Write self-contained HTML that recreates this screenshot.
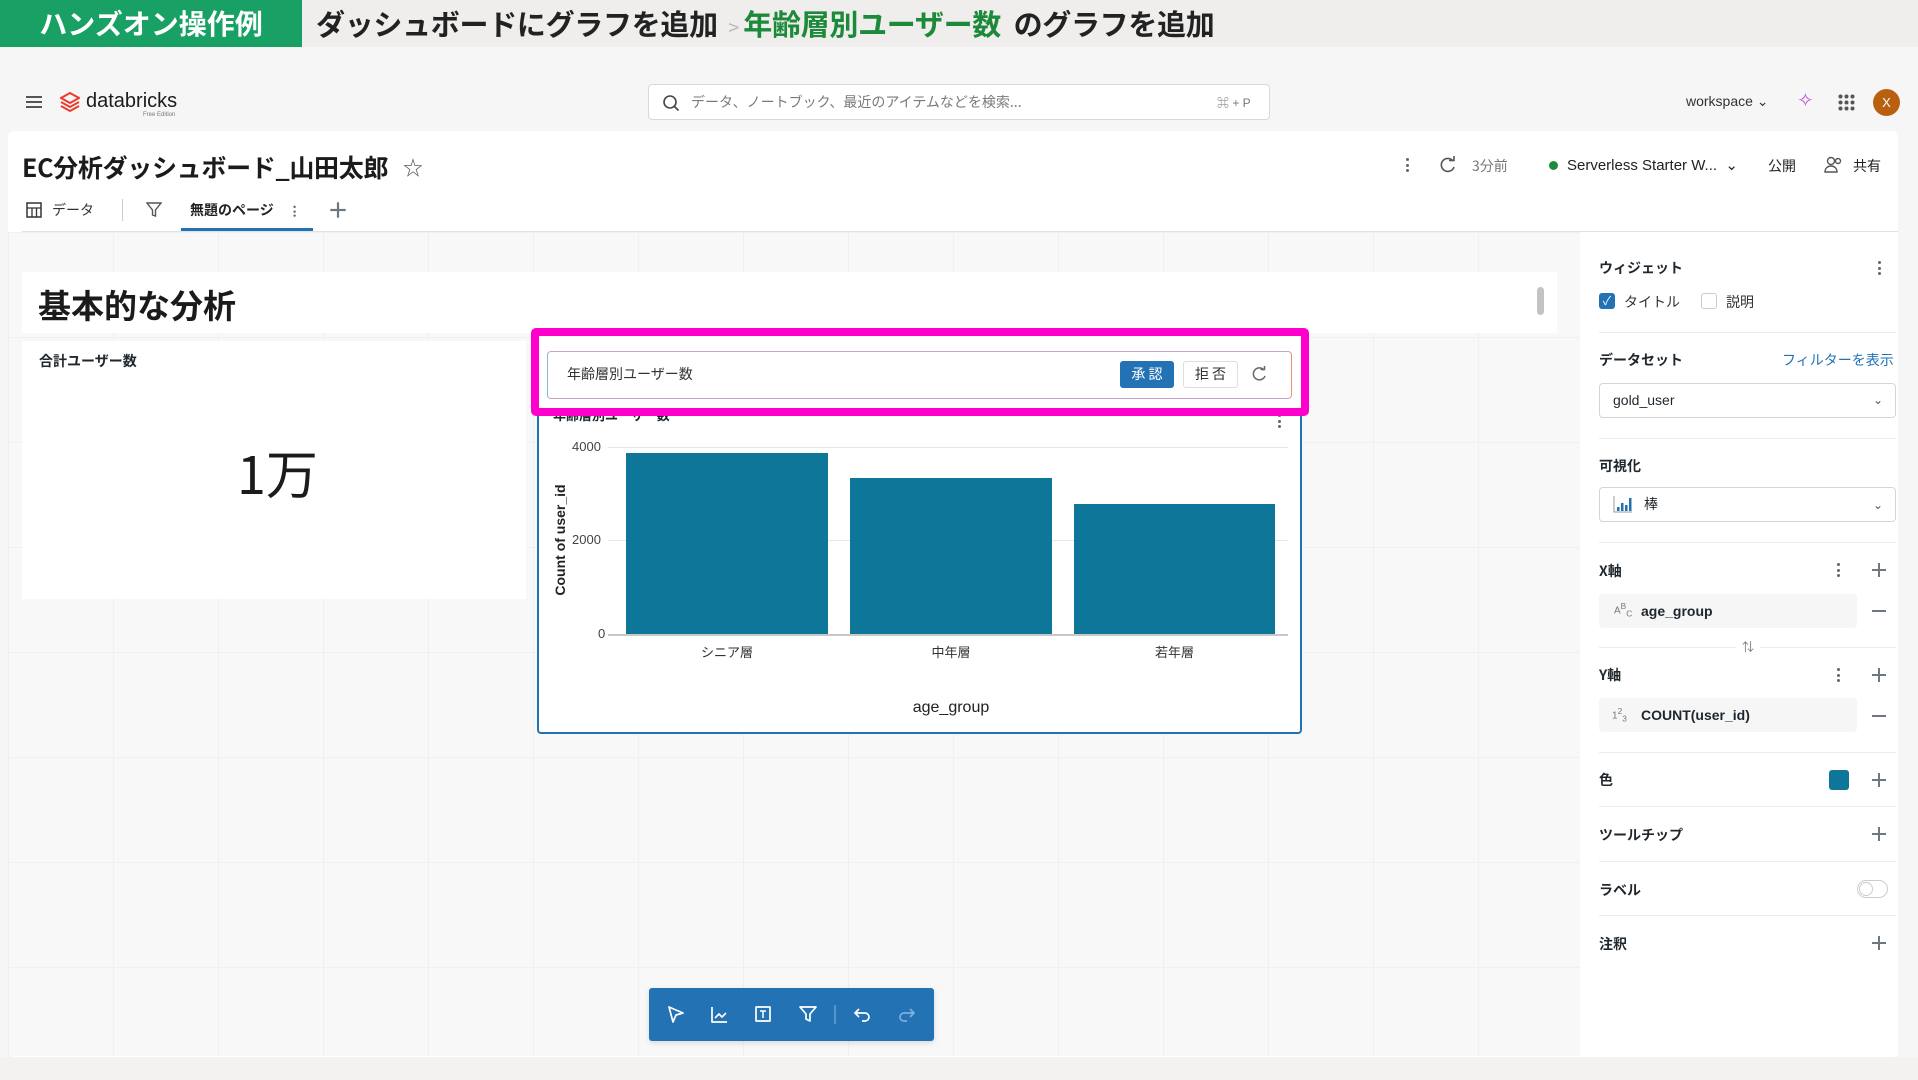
<!DOCTYPE html>
<html><head><meta charset="utf-8"><style>
*{box-sizing:border-box;margin:0;padding:0}
body{width:1918px;height:1080px;overflow:hidden;background:#f6f6f6;font-family:"Liberation Sans","Noto Sans CJK JP",sans-serif;color:#1f272d;position:relative}
.a{position:absolute}
.jp{font-family:"Noto Sans CJK JP","Liberation Sans",sans-serif}
.lbl{font-weight:bold;font-size:14px}
.sep{position:absolute;left:1599px;width:297px;height:1px;background:#ebebeb}
.plus{position:absolute;width:14px;height:14px}
.plus:before,.plus:after{content:"";position:absolute;background:#6f7780}
.plus:before{left:0;top:6px;width:14px;height:1.5px}
.plus:after{left:6px;top:0;width:1.5px;height:14px}
.kb{position:absolute;width:4px}
.kb i{display:block;width:3px;height:3px;border-radius:50%;background:#5f6770;margin-bottom:2.5px}
</style></head><body>
<!-- banner -->
<div class="a" style="left:0;top:0;width:1918px;height:47px;background:#efeeec"></div>
<div class="a jp" style="left:0;top:0;width:302px;height:47px;background:#18a065;color:#fff;font-size:28px;font-weight:bold;line-height:47px;text-align:center">ハンズオン操作例</div>
<div class="a jp" style="left:316px;top:0;height:47px;line-height:47px;font-size:29px;font-weight:bold;color:#222;white-space:nowrap;letter-spacing:-0.3px">ダッシュボードにグラフを追加 <span style="color:#bbb;font-weight:normal;font-size:20px">&nbsp;&gt;&nbsp;</span><span style="color:#1c8a3a">年齢層別ユーザー数</span>&nbsp; のグラフを追加</div>
<!-- nav -->
<div class="a" style="left:0;top:47px;width:1918px;height:84px;background:#f6f6f6"></div>
<div class="a" style="left:26px;top:96px;width:16px;height:2px;background:#555;box-shadow:0 5px 0 #555,0 10px 0 #555"></div>
<svg class="a" style="left:60px;top:92px" width="20" height="22" viewBox="0 0 20 22"><path d="M10 1L19 6 10 11 1 6z M1 10l9 5 9-5 M1 14l9 5 9-5" fill="none" stroke="#eb3d2f" stroke-width="2"/></svg>
<div class="a" style="left:86px;top:90px;font-size:20px;color:#1b1b1b">databricks</div>
<div class="a" style="left:143px;top:112px;font-size:6px;color:#777">Free Edition</div>
<div class="a jp" style="left:648px;top:84px;width:622px;height:36px;background:#fff;border:1px solid #d9d9d9;border-radius:4px;font-size:14px;color:#7a7a7a;line-height:34px;padding-left:42px">データ、ノートブック、最近のアイテムなどを検索...</div>
<svg class="a" style="left:662px;top:94px" width="18" height="18"><circle cx="8" cy="8" r="6" fill="none" stroke="#444" stroke-width="1.6"/><path d="M12.5 12.5l4 4" stroke="#444" stroke-width="1.6"/></svg>
<div class="a" style="left:1217px;top:94px;font-size:12px;color:#777">⌘ + P</div>
<div class="a" style="left:1686px;top:93px;font-size:14px;color:#333">workspace ⌄</div>
<div class="a" style="left:1797px;top:88px;font-size:20px;color:#c057e0">✧</div>
<svg class="a" style="left:1838px;top:94px" width="17" height="17"><g fill="#555"><circle cx="2.5" cy="2.5" r="2"/><circle cx="8.5" cy="2.5" r="2"/><circle cx="14.5" cy="2.5" r="2"/><circle cx="2.5" cy="8.5" r="2"/><circle cx="8.5" cy="8.5" r="2"/><circle cx="14.5" cy="8.5" r="2"/><circle cx="2.5" cy="14.5" r="2"/><circle cx="8.5" cy="14.5" r="2"/><circle cx="14.5" cy="14.5" r="2"/></g></svg>
<div class="a" style="left:1873px;top:89px;width:27px;height:27px;border-radius:50%;background:#b8600f;color:#fff;font-size:13px;text-align:center;line-height:27px">X</div>
<!-- main panel -->
<div class="a" style="left:8px;top:131px;width:1890px;height:926px;background:#fff;border-radius:6px"></div>
<div class="a jp" style="left:22px;top:149px;font-size:25px;font-weight:bold;color:#1b1b1b;letter-spacing:-0.3px">EC分析ダッシュボード_山田太郎</div>
<div class="a" style="left:403px;top:152px;font-size:20px;color:#555">☆</div>
<div class="kb" style="left:1406px;top:158px"><i></i><i></i><i></i></div>
<svg class="a" style="left:1439px;top:156px" width="18" height="18"><path d="M14 5A6.5 6.5 0 1 0 15 11" fill="none" stroke="#555" stroke-width="1.6"/><path d="M10 4.5h5V0" fill="none" stroke="#555" stroke-width="1.6"/></svg>
<div class="a jp" style="left:1472px;top:156px;font-size:14px;color:#777">3分前</div>
<div class="a" style="left:1549px;top:161px;width:9px;height:9px;border-radius:50%;background:#208a3c"></div>
<div class="a" style="left:1567px;top:156px;font-size:15px;color:#222">Serverless Starter W... &nbsp;⌄</div>
<div class="a jp" style="left:1768px;top:156px;font-size:14px;color:#222">公開</div>
<svg class="a" style="left:1824px;top:156px" width="20" height="18"><circle cx="7" cy="5" r="3.5" fill="none" stroke="#555" stroke-width="1.4"/><path d="M1 16c0-4 3-6 6-6s6 2 6 6z" fill="none" stroke="#555" stroke-width="1.4"/><circle cx="14" cy="5" r="2.5" fill="none" stroke="#555" stroke-width="1.4"/></svg>
<div class="a jp" style="left:1853px;top:156px;font-size:14px;color:#222">共有</div>
<!-- tabs -->
<svg class="a" style="left:26px;top:202px" width="16" height="16"><rect x="1" y="1" width="14" height="14" fill="none" stroke="#333" stroke-width="1.5"/><path d="M1 6h14M6 6v9M10.5 6v9" stroke="#333" stroke-width="1.3"/></svg>
<div class="a jp" style="left:52px;top:200px;font-size:14px;color:#333">データ</div>
<div class="a" style="left:122px;top:199px;width:1px;height:22px;background:#ccc"></div>
<svg class="a" style="left:146px;top:202px" width="16" height="16"><path d="M1 1h14l-5.5 7v6l-3-1V8z" fill="none" stroke="#555" stroke-width="1.4"/></svg>
<div class="a jp" style="left:190px;top:200px;font-size:14px;font-weight:bold;color:#222">無題のページ</div>
<div class="kb" style="left:293px;top:204px;transform:scale(.8)"><i></i><i></i><i></i></div>
<div class="plus" style="left:331px;top:203px;transform:scale(1.1)"></div>
<div class="a" style="left:181px;top:228px;width:132px;height:3px;background:#2272b4"></div>
<div class="a" style="left:22px;top:231px;width:1876px;height:1px;background:#e2e2e2"></div>
<!-- canvas -->
<div class="a" style="left:8px;top:232px;width:1572px;height:824px;background:#f8f8f8;background-image:linear-gradient(#f0f0f0 1px,transparent 1px),linear-gradient(90deg,#f0f0f0 1px,transparent 1px);background-size:100% 105px,105px 100%"></div>
<div class="a" style="left:22px;top:272px;width:1535px;height:61px;background:#fff"></div>
<div class="a jp" style="left:38px;top:280px;font-size:33px;font-weight:bold;color:#1b1b1b">基本的な分析</div>
<div class="a" style="left:1537px;top:287px;width:7px;height:28px;border-radius:4px;background:#c3c3c3"></div>
<div class="a" style="left:22px;top:341px;width:504px;height:258px;background:#fff"></div>
<div class="a jp" style="left:39px;top:351px;font-size:14px;font-weight:bold">合計ユーザー数</div>
<div class="a jp" style="left:237px;top:434px;font-size:52px;color:#1b1b1b">1万</div>
<!-- chart -->
<div class="a" style="left:537px;top:410px;width:765px;height:324px;background:#fff;border:2px solid #2272b4;border-radius:4px"></div>
<div class="a jp" style="left:553px;top:405px;font-size:13px;font-weight:bold">年齢層別ユーザー数</div>
<div class="kb" style="left:1278px;top:414px"><i></i><i></i><i></i></div>
<div class="a" style="left:608px;top:447px;width:680px;height:1px;background:#e6e6e6"></div>
<div class="a" style="left:608px;top:540px;width:680px;height:1px;background:#e6e6e6"></div>
<div class="a" style="left:608px;top:634px;width:680px;height:1.5px;background:#c8c8c8"></div>
<div class="a" style="left:572px;top:439px;font-size:13px;color:#444">4000</div>
<div class="a" style="left:572px;top:532px;font-size:13px;color:#444">2000</div>
<div class="a" style="left:598px;top:626px;font-size:13px;color:#444">0</div>
<div class="a" style="left:490px;top:532px;width:140px;text-align:center;transform:rotate(-90deg);font-size:14px;font-weight:bold;color:#222">Count of user_id</div>
<div class="a" style="left:626px;top:453px;width:202px;height:181px;background:#0e7799"></div>
<div class="a" style="left:850px;top:478px;width:202px;height:156px;background:#0e7799"></div>
<div class="a" style="left:1074px;top:504px;width:201px;height:130px;background:#0e7799"></div>
<div class="a jp" style="left:626px;top:642px;width:202px;text-align:center;font-size:13px;color:#333">シニア層</div>
<div class="a jp" style="left:850px;top:642px;width:202px;text-align:center;font-size:13px;color:#333">中年層</div>
<div class="a jp" style="left:1074px;top:642px;width:201px;text-align:center;font-size:13px;color:#333">若年層</div>
<div class="a" style="left:850px;top:699px;width:202px;text-align:center;font-size:16px;color:#222">age_group</div>
<!-- magenta highlight -->
<div class="a" style="left:531px;top:328px;width:778px;height:88px;border:8px solid #ff00cc;border-radius:5px;background:#fff"></div>
<div class="a" style="left:547px;top:351px;width:745px;height:48px;border:1.5px solid #c9a3c8;border-left-color:#86b7d6;border-right-color:#e8907a;border-radius:4px"></div>
<div class="a jp" style="left:567px;top:364px;font-size:14px;color:#333">年齢層別ユーザー数</div>
<div class="a jp" style="left:1120px;top:361px;width:54px;height:27px;background:#2272b4;color:#fff;border-radius:3px;font-size:14px;text-align:center;line-height:27px">承 認</div>
<div class="a jp" style="left:1183px;top:361px;width:55px;height:27px;background:#fff;border:1px solid #ddd;color:#333;border-radius:3px;font-size:14px;text-align:center;line-height:25px">拒 否</div>
<svg class="a" style="left:1251px;top:366px" width="17" height="17"><path d="M13 4A6 6 0 1 0 14 10" fill="none" stroke="#666" stroke-width="1.5"/><path d="M9.5 3.5h4V-.5" fill="none" stroke="#666" stroke-width="1.5"/></svg>
<!-- right panel -->
<div class="a" style="left:1580px;top:232px;width:318px;height:824px;background:#fff"></div>
<div class="a jp lbl" style="left:1599px;top:258px">ウィジェット</div>
<div class="kb" style="left:1878px;top:261px"><i></i><i></i><i></i></div>
<div class="a" style="left:1599px;top:293px;width:16px;height:16px;border-radius:3px;background:#2272b4;color:#fff;font-size:12px;line-height:16px;text-align:center">✓</div>
<div class="a jp" style="left:1624px;top:292px;font-size:14px;color:#333">タイトル</div>
<div class="a" style="left:1701px;top:293px;width:16px;height:16px;border-radius:3px;border:1px solid #ccc"></div>
<div class="a jp" style="left:1726px;top:292px;font-size:14px;color:#333">説明</div>
<div class="sep" style="top:332px"></div>
<div class="a jp lbl" style="left:1599px;top:350px">データセット</div>
<div class="a jp" style="left:1782px;top:350px;font-size:14px;color:#2272b4">フィルターを表示</div>
<div class="a" style="left:1599px;top:383px;width:297px;height:35px;border:1px solid #d5d5d5;border-radius:4px;font-size:14px;line-height:33px;padding-left:13px">gold_user<span style="position:absolute;right:12px;color:#555;font-size:12px">⌄</span></div>
<div class="sep" style="top:438px"></div>
<div class="a jp lbl" style="left:1599px;top:456px">可視化</div>
<div class="a jp" style="left:1599px;top:487px;width:297px;height:35px;border:1px solid #d5d5d5;border-radius:4px;font-size:14px;line-height:33px;padding-left:44px">棒<span style="position:absolute;right:12px;color:#555;font-size:12px">⌄</span></div>
<svg class="a" style="left:1613px;top:495px" width="20" height="18"><path d="M1 1v16h18" stroke="#999" fill="none"/><rect x="4" y="12" width="2.5" height="4" fill="#2272b4"/><rect x="8" y="8" width="2.5" height="8" fill="#2272b4"/><rect x="12" y="10" width="2.5" height="6" fill="#2272b4"/><rect x="16" y="3" width="2.5" height="13" fill="#2272b4"/></svg>
<div class="sep" style="top:542px"></div>
<div class="a lbl jp" style="left:1599px;top:561px">X軸</div>
<div class="kb" style="left:1837px;top:563px"><i></i><i></i><i></i></div>
<div class="plus" style="left:1872px;top:563px"></div>
<div class="a" style="left:1599px;top:594px;width:258px;height:34px;background:#f6f6f6;border-radius:4px;font-size:14px;font-weight:bold;line-height:34px;padding-left:42px">age_group</div>
<div class="a" style="left:1614px;top:601px;font-size:10px;color:#777">A<sup>B</sup><sub>C</sub></div>
<div class="a" style="left:1872px;top:610px;width:14px;height:1.5px;background:#6f7780"></div>
<div class="sep" style="top:647px"></div>
<div class="a" style="left:1736px;top:638px;width:24px;height:18px;background:#fff;font-size:12px;color:#777;text-align:center">⇅</div>
<div class="a lbl jp" style="left:1599px;top:665px">Y軸</div>
<div class="kb" style="left:1837px;top:668px"><i></i><i></i><i></i></div>
<div class="plus" style="left:1872px;top:668px"></div>
<div class="a" style="left:1599px;top:698px;width:258px;height:34px;background:#f6f6f6;border-radius:4px;font-size:14px;font-weight:bold;line-height:34px;padding-left:42px">COUNT(user_id)</div>
<div class="a" style="left:1612px;top:706px;font-size:10px;color:#777">1<sup>2</sup><sub>3</sub></div>
<div class="a" style="left:1872px;top:715px;width:14px;height:1.5px;background:#6f7780"></div>
<div class="sep" style="top:752px"></div>
<div class="a lbl jp" style="left:1599px;top:770px">色</div>
<div class="a" style="left:1829px;top:770px;width:20px;height:20px;border-radius:3px;background:#0e7799"></div>
<div class="plus" style="left:1872px;top:773px"></div>
<div class="sep" style="top:806px"></div>
<div class="a lbl jp" style="left:1599px;top:825px">ツールチップ</div>
<div class="plus" style="left:1872px;top:827px"></div>
<div class="sep" style="top:861px"></div>
<div class="a lbl jp" style="left:1599px;top:880px">ラベル</div>
<div class="a" style="left:1857px;top:880px;width:31px;height:18px;border:1px solid #ccc;border-radius:9px"><div style="width:14px;height:14px;margin:1px;border:1px solid #ccc;border-radius:50%"></div></div>
<div class="sep" style="top:915px"></div>
<div class="a lbl jp" style="left:1599px;top:934px">注釈</div>
<div class="plus" style="left:1872px;top:936px"></div>
<!-- toolbar -->
<div class="a" style="left:649px;top:988px;width:285px;height:53px;background:#2272b4;border-radius:3px;box-shadow:0 2px 6px rgba(0,0,0,.12)"></div>
<svg class="a" style="left:649px;top:988px" width="285" height="53" fill="none" stroke="#fff" stroke-width="1.7" stroke-linejoin="round">
<path d="M20 19l14 6-7 2-3 7z"/>
<path d="M63 19v15h15M66 30l4-4 3 3 4-4"/>
<rect x="107" y="19" width="14" height="14"/><path d="M111 23h6M114 23v7" stroke-width="1.5"/>
<path d="M151 19h16l-6 7v7l-4-2v-5z"/>
<path d="M186 17v19" stroke="#8fb6da" stroke-width="1"/>
<path d="M210 21l-4 4 4 4M206 25h10a4 4 0 0 1 0 8h-3"/>
<path d="M261 21l4 4-4 4M265 25h-10a4 4 0 0 0 0 8h3" stroke="#7fb0dd"/>
</svg>
<div class="a" style="left:0;top:1057px;width:1918px;height:23px;background:#f3f2f0"></div>
</body></html>
